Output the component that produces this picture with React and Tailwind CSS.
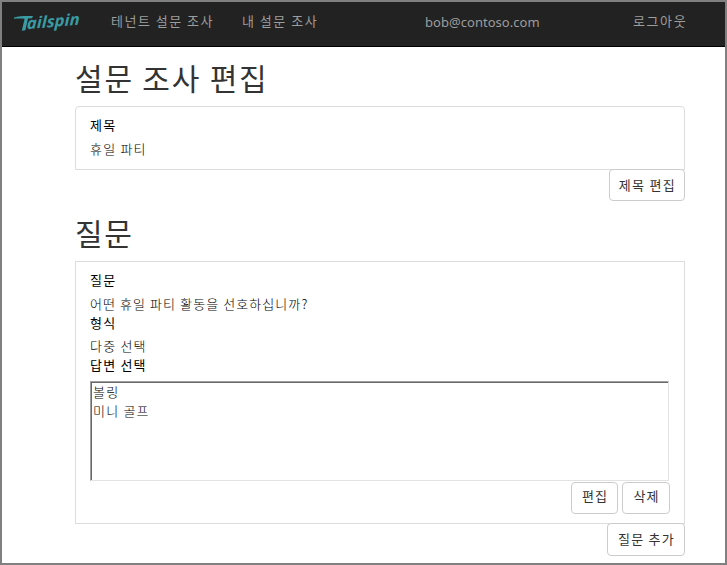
import React from 'react';

const FONT = "font-['Noto_Sans_CJK_KR','Noto_Sans',sans-serif]";

function Logo() {
  return (
    <svg width="74" height="34" viewBox="0 0 74 34" className="block shrink-0 overflow-visible" aria-label="Tailspin">
      <path d="M2 12.4 C7 11 13 10.8 21 11 L20 13.2 L16 13.4 L13.4 25.2 L9.8 25.8 L12.6 13.8 C8 13.4 5 13.4 2 13.8 Z" fill="#3a9ba3" />
      <text
        x="14.8"
        y="24.2"
        transform="rotate(-5 14.8 24.2) translate(14.8 24.2) skewX(-6) translate(-14.8 -24.2)"
        textLength="53"
        lengthAdjust="spacingAndGlyphs"
        className="fill-[#3a9ba3] font-['Open_Sans',sans-serif] text-[16px] font-bold italic leading-none"
      >
        ailspin
      </text>
    </svg>
  );
}

function Button({ children, className }) {
  return (
    <button
      className={`flex shrink-0 items-center justify-center whitespace-nowrap rounded-[4px] border border-[#cccccc] bg-white pl-px text-[13px] leading-none text-[#333333] ${className}`}
    >
      {children}
    </button>
  );
}

function Label({ children, className = '' }) {
  return <div className={`text-[13px] font-normal text-black ${className}`}>{children}</div>;
}

function Value({ children, className = '' }) {
  return <div className={`text-[13px] font-light text-black ${className}`}>{children}</div>;
}

export default function App() {
  return (
    <div className={`h-[565px] w-[727px] overflow-hidden border-2 border-[#808080] bg-white ${FONT}`}>
      <nav className="flex h-[45px] items-start border-b border-black bg-[#222222] pl-[10px] text-[13px] leading-5 text-[#9d9d9d]">
        <div className="mr-[25px] mt-[3px]">
          <Logo />
        </div>
        <a className="mt-[9px] w-[131px] whitespace-nowrap tracking-[1.5px]">테넌트 설문 조사</a>
        <a className="mt-[9px] w-[183px] whitespace-nowrap tracking-[1.5px]">내 설문 조사</a>
        <a className="mt-[10px] w-[208px] whitespace-nowrap font-['Noto_Sans',sans-serif] tracking-[0.04px]">bob@contoso.com</a>
        <a className="mt-[9px] whitespace-nowrap tracking-[1.6px]">로그아웃</a>
      </nav>

      <main className="ml-[73px] w-[610px]">
        <h1 className="h-[59px] pt-[10px] text-[30px] leading-[40px] tracking-[1.8px] text-[#333333]">설문 조사 편집</h1>
        <section className="h-[64px] rounded-t-[4px] border border-[#dddddd] px-[14px] pt-[8px]">
          <Label className="h-6 leading-5 tracking-[1.3px]">제목</Label>
          <Value className="h-5 leading-5 tracking-[1.2px]">휴일 파티</Value>
        </section>
        <div className="-mt-px flex justify-end">
          <Button className="h-8 w-[76px] pb-[2px] tracking-[1.3px]">제목 편집</Button>
        </div>

        <h1 className="h-[60px] pt-[11px] text-[30px] leading-[40px] tracking-[1.6px] text-[#333333]">질문</h1>
        <section className="h-[263px] border border-[#dddddd] px-[14px] pt-[8px]">
          <Label className="h-6 leading-5 tracking-[1.3px]">질문</Label>
          <Value className="h-[19px] leading-5 tracking-[1.08px]">어떤 휴일 파티 활동을 선호하십니까?</Value>
          <Label className="h-[23px] leading-5 tracking-[1.3px]">형식</Label>
          <Value className="h-[19px] leading-5 tracking-[1.2px]">다중 선택</Value>
          <Label className="h-[26px] leading-5 tracking-[1.2px]">답변 선택</Label>
          <div className="mb-px h-[100px] w-[579px] border border-l-[#a0a0a0] border-t-[#a0a0a0] border-b-[#e3e3e3] border-r-[#e3e3e3]">
            <div className="h-full border-l border-t border-[#696969] pl-px">
              <Value className="-mt-px h-[19px] leading-5 tracking-[1.2px]">볼링</Value>
              <Value className="h-[19px] leading-5 tracking-[1.2px]">미니 골프</Value>
            </div>
          </div>
          <div className="flex justify-end gap-1">
            <Button className="h-8 w-[47px] pb-[5px] tracking-[1px]">편집</Button>
            <Button className="h-8 w-12 pb-[5px] tracking-[1px]">삭제</Button>
          </div>
        </section>
        <div className="-mt-px flex justify-end">
          <Button className="h-[33px] w-[78px] pb-[2px] tracking-[1.2px]">질문 추가</Button>
        </div>
      </main>
    </div>
  );
}
